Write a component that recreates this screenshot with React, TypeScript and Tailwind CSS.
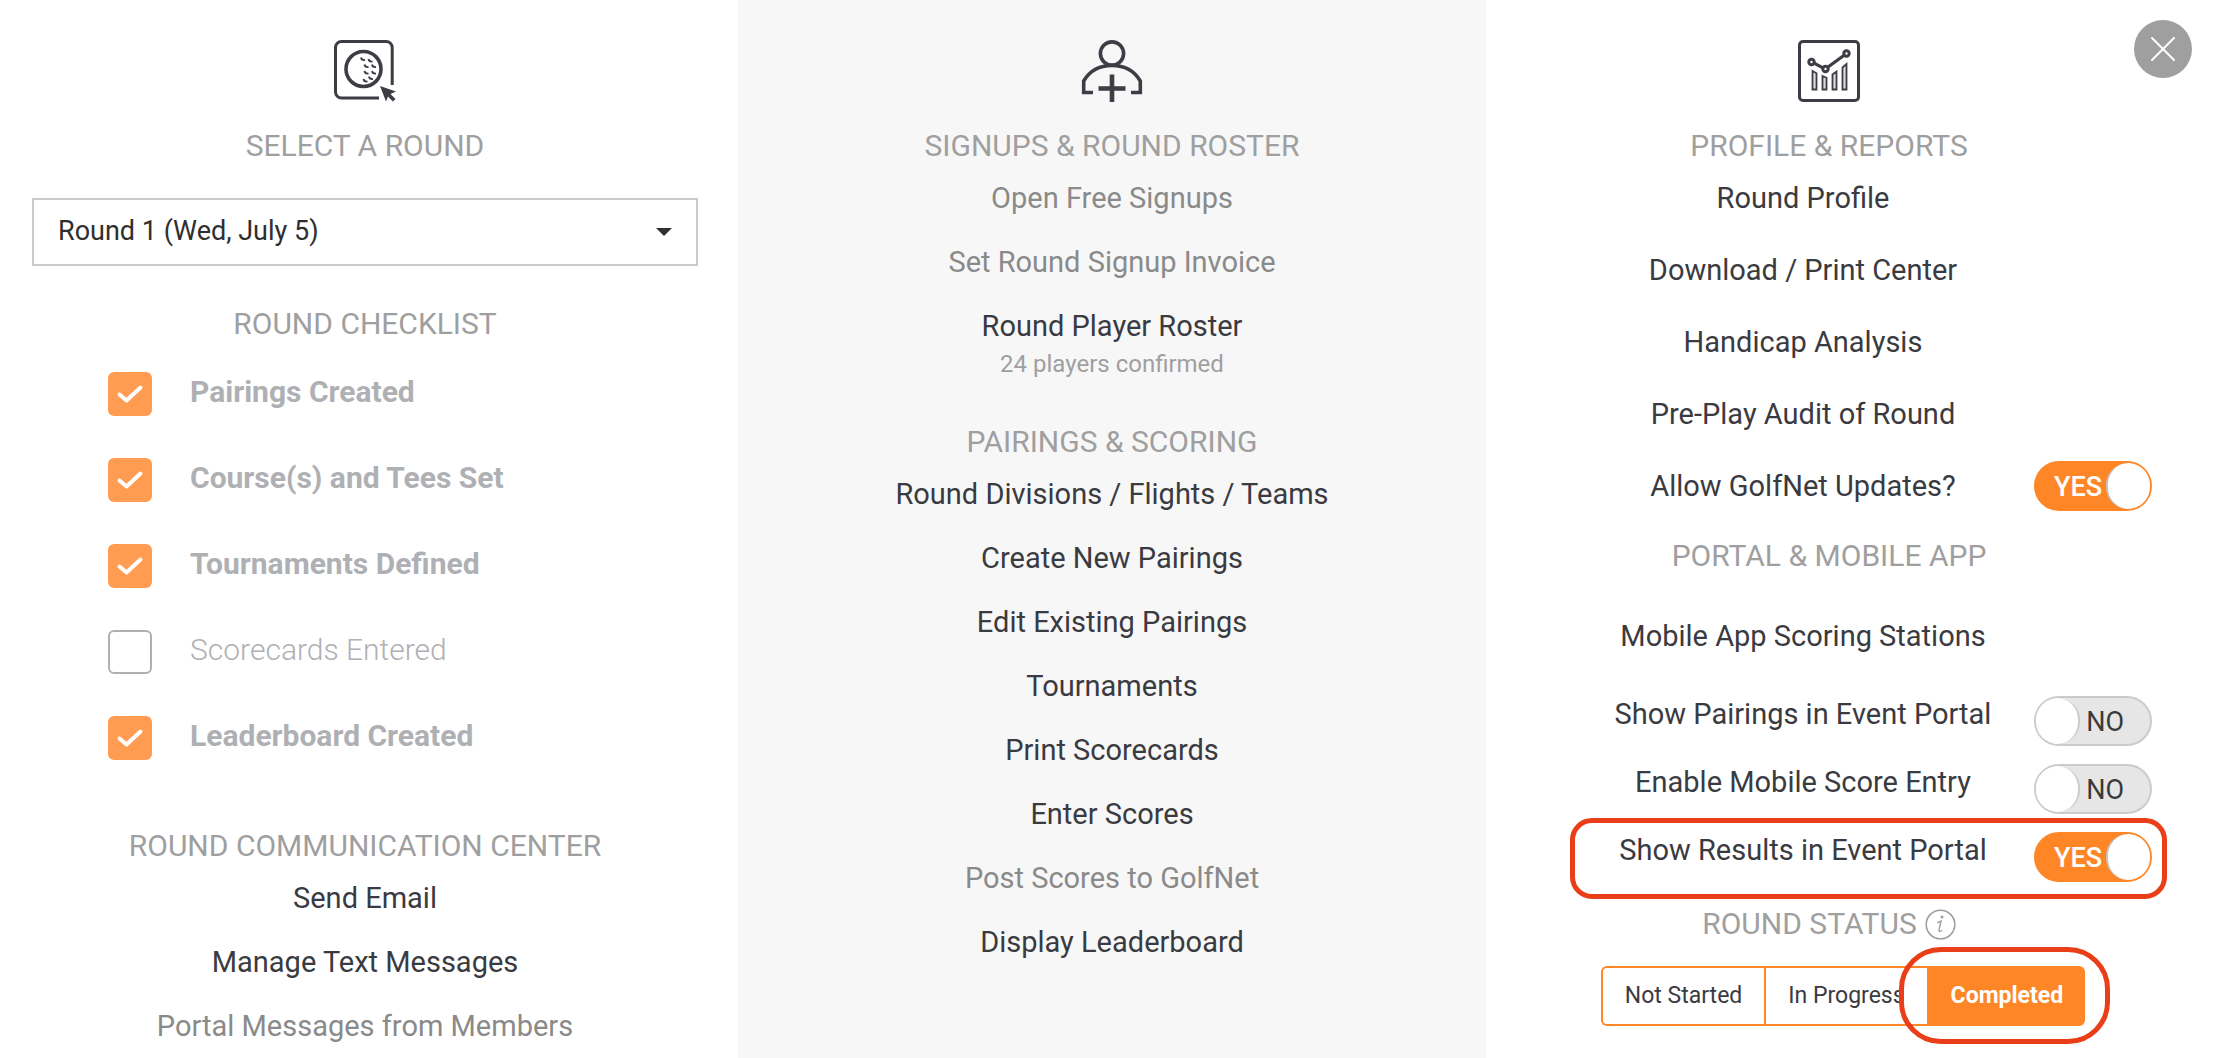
import { useState } from "react";
import type { ReactNode } from "react";

const checklist = [
  { id: "pairings", label: "Pairings Created", done: true },
  { id: "tees", label: "Course(s) and Tees Set", done: true },
  { id: "tournaments", label: "Tournaments Defined", done: true },
  { id: "scorecards", label: "Scorecards Entered", done: false },
  { id: "leaderboard", label: "Leaderboard Created", done: true },
];

const scoringLinks = [
  { label: "Round Divisions / Flights / Teams" },
  { label: "Create New Pairings" },
  { label: "Edit Existing Pairings" },
  { label: "Tournaments" },
  { label: "Print Scorecards" },
  { label: "Enter Scores" },
  { label: "Post Scores to GolfNet", muted: true },
  { label: "Display Leaderboard" },
];

const reportLinks = ["Round Profile", "Download / Print Center", "Handicap Analysis", "Pre-Play Audit of Round"];

const statuses = ["Not Started", "In Progress", "Completed"];

function Heading({ children }: { children: ReactNode }) {
  return (
    <h2 className="flex items-center justify-center gap-2 text-center text-[30px] leading-10 text-[#9f9f9f]">
      {children}
    </h2>
  );
}

function MenuLink({ label, muted = false }: { label: string; muted?: boolean }) {
  return (
    <a
      href="#"
      className={`block py-3 text-center text-[29px] leading-10 ${muted ? "text-[#8a8a8a]" : "text-[#3a3a41]"}`}
    >
      {label}
    </a>
  );
}

function ChecklistItem({ id, label, done }: { id: string; label: string; done: boolean }) {
  const [checked, setChecked] = useState(done);
  return (
    <li className="flex h-11 items-center">
      <span className="relative size-11">
        <input
          id={id}
          type="checkbox"
          checked={checked}
          onChange={(e) => setChecked(e.target.checked)}
          className="block size-11 appearance-none rounded-md border-2 border-[#b0b0b3] checked:border-[#ff9c52] checked:bg-[#ff9c52]"
        />
        {checked && (
          <svg className="pointer-events-none absolute inset-0 size-11" viewBox="0 0 44 44" fill="none">
            <path d="M11.5 22.5L18.5 28.5L32.5 15.5" stroke="#fff" strokeWidth="4" strokeLinecap="round" strokeLinejoin="round" />
          </svg>
        )}
      </span>
      <label
        htmlFor={id}
        className={`pb-1 pl-[38px] text-[30px] leading-10 text-[#afb0b4] ${checked ? "font-bold" : "font-light"}`}
      >
        {label}
      </label>
    </li>
  );
}

function Toggle({ id, initial }: { id: string; initial: boolean }) {
  const [on, setOn] = useState(initial);
  return (
    <span
      className={`relative flex h-[50px] w-[118px] shrink-0 items-center rounded-full border-2 pt-0.5 text-[27px] ${
        on ? "border-[#ff8626] bg-[#ff8626] pl-[18px] font-medium text-white" : "justify-end border-[#cbcbcb] bg-[#e6e6e6] pr-[26px] text-[#3a3a3a]"
      }`}
    >
      {on ? "YES" : "NO"}
      <span
        className={`absolute top-0 h-[46px] w-[44px] rounded-full bg-white ${
          on ? "right-0 border-l-2 border-[#c4c4c4]" : "left-0 border-r-2 border-[#cbcbcb]"
        }`}
      />
      <input
        id={id}
        type="checkbox"
        role="switch"
        checked={on}
        onChange={(e) => setOn(e.target.checked)}
        className="absolute inset-0 cursor-pointer appearance-none"
      />
    </span>
  );
}

function SwitchRow({ id, label, initial, highlight = false }: { id: string; label: string; initial: boolean; highlight?: boolean }) {
  return (
    <div className="relative flex h-[50px] items-start">
      <label htmlFor={id} className="flex-1 text-center text-[29px] leading-9 text-[#3a3a41]">
        {label}
      </label>
      <Toggle id={id} initial={initial} />
      {highlight && (
        <span className="pointer-events-none absolute -top-[14px] -right-[15px] -bottom-[17px] -left-[2px] rounded-[22px] border-5 border-[#e93e17]" />
      )}
    </div>
  );
}

function BallIcon() {
  return (
    <svg className="mx-auto size-[62px]" viewBox="0 0 62 62" fill="none" stroke="#3e3d45">
      <path d="M58.2 45V7.5a6 6 0 0 0-6-6H7.5a6 6 0 0 0-6 6v44.5a6 6 0 0 0 6 6H45" strokeWidth="3" />
      <circle cx="29.5" cy="29" r="17.5" strokeWidth="3.6" />
      <path
        d="M27 17.5q.5 3 4 2.500M34.500 19q.5 3 4 2.500M30.500 24.500q.5 3 4 2.500M38 24.500q.5 3 4 2.500M30.500 31q.5 3 4 2.500M38 31q.5 3 4 2.500M35 36.500q.5 3 4 2.500M29.500 39q.5 3 4 2.500"
        strokeWidth="1.8"
      />
      <path d="M46 46L62 51.5L56.5 54L61.5 59L58.8 61.5L54 56.5L52 61.5Z" fill="#3e3d45" stroke="none" />
    </svg>
  );
}

function PlayerIcon() {
  return (
    <svg className="mx-auto size-[62px]" viewBox="0 0 62 62" fill="none" stroke="#3e3d45" strokeWidth="3.6">
      <circle cx="31" cy="13.5" r="11.6" />
      <path d="M12 52.5H2.700V41C8.500 31 18.500 25.500 31 25.500S53.500 31 59.300 41v11.500H50" />
      <path d="M31 34.5V62M17.500 48.500h27" strokeWidth="4.6" />
    </svg>
  );
}

function ReportIcon() {
  return (
    <svg className="mx-auto size-[62px]" viewBox="0 0 62 62" fill="none" stroke="#3e3d45">
      <rect x="1.5" y="1.5" width="59" height="59" rx="3.5" strokeWidth="3" />
      <path d="M16 23.2L25 27.8M30 27L46.500 15" strokeWidth="3.2" />
      <circle cx="13.5" cy="22" r="2.7" strokeWidth="3" />
      <circle cx="27.5" cy="29" r="2.7" strokeWidth="3" />
      <circle cx="48.5" cy="13.5" r="2.7" strokeWidth="3" />
      <path
        d="M14.500 31l4 2.200V49.500h-4zM24.500 36l4 1.800V49.500h-4zM34.500 34.500l4-3V49.500h-4zM44.500 27.500l4-3.500V49.500h-4z"
        fill="#dcdcde"
        strokeWidth="1.8"
      />
    </svg>
  );
}

function InfoIcon() {
  return (
    <svg className="size-[31px]" viewBox="0 0 31 31" fill="none" stroke="#9f9f9f" strokeWidth="1.6" strokeLinecap="round">
      <circle cx="15.5" cy="15.5" r="14.3" />
      <path d="M12.8 13.5c1.500-.3 2.400-1.200 3.200-1.500l-2 9.200c-.2 1.500.7 1.800 2.800.3" strokeWidth="1.4" />
      <circle cx="17" cy="8" r=".7" fill="#9f9f9f" />
    </svg>
  );
}

export default function App() {
  const [status, setStatus] = useState("Completed");

  return (
    <main className="relative grid min-h-screen grid-cols-[738fr_748fr_738fr] bg-white font-['Roboto',sans-serif]">
      <section className="pt-10 pr-10 pl-8">
        <BallIcon />
        <div className="mt-6">
          <Heading>
            <label htmlFor="round">SELECT A ROUND</label>
          </Heading>
        </div>
        <div className="relative mt-8">
          <select
            id="round"
            className="h-17 w-full appearance-none border-2 border-[#cbcbcb] bg-white pb-0.5 pl-6 text-[27px] text-[#2f2f2f]"
          >
            <option>Round 1 (Wed, July 5)</option>
          </select>
          <svg className="pointer-events-none absolute top-[30px] right-[26px] h-2 w-4" viewBox="0 0 16 8">
            <path d="M0 0h16L8 8z" fill="#2f2f2f" />
          </svg>
        </div>

        <div className="mt-[38px]">
          <Heading>ROUND CHECKLIST</Heading>
        </div>
        <ul className="mt-7 flex flex-col gap-[42px] pl-[76px]">
          {checklist.map((item) => (
            <ChecklistItem key={item.id} {...item} />
          ))}
        </ul>

        <div className="mt-[66px]">
          <Heading>ROUND COMMUNICATION CENTER</Heading>
        </div>
        <nav>
          <MenuLink label="Send Email" />
          <MenuLink label="Manage Text Messages" />
          <MenuLink label="Portal Messages from Members" muted />
        </nav>
      </section>

      <section className="bg-[#f7f7f7] pt-10">
        <PlayerIcon />
        <div className="mt-6">
          <Heading>SIGNUPS &amp; ROUND ROSTER</Heading>
        </div>
        <nav>
          <MenuLink label="Open Free Signups" muted />
          <MenuLink label="Set Round Signup Invoice" muted />
          <a href="#" className="block pt-3 text-center text-[29px] leading-10 text-[#3a3a41]">
            Round Player Roster
            <span className="block text-2xl leading-9 text-[#9f9f9f]">24 players confirmed</span>
          </a>
        </nav>

        <div className="mt-10">
          <Heading>PAIRINGS &amp; SCORING</Heading>
        </div>
        <nav>
          {scoringLinks.map((link) => (
            <MenuLink key={link.label} {...link} />
          ))}
        </nav>
      </section>

      <section className="pt-10 pr-[52px] pb-8">
        <ReportIcon />
        <div className="mt-6">
          <Heading>PROFILE &amp; REPORTS</Heading>
        </div>
        <div className="mt-3 flex flex-col gap-8 pr-5 pl-[86px]">
          {reportLinks.map((label) => (
            <a key={label} href="#" className="mr-[118px] text-center text-[29px] leading-10 text-[#3a3a41]">
              {label}
            </a>
          ))}
          <div className="flex h-10 items-center">
            <label htmlFor="golfnet" className="flex-1 text-center text-[29px] leading-10 text-[#3a3a41]">
              Allow GolfNet Updates?
            </label>
            <Toggle id="golfnet" initial />
          </div>
        </div>

        <div className="mt-[30px]">
          <Heading>PORTAL &amp; MOBILE APP</Heading>
        </div>
        <div className="mt-10 pr-5 pl-[86px]">
          <a href="#" className="mr-[118px] block text-center text-[29px] leading-10 text-[#3a3a41]">
            Mobile App Scoring Stations
          </a>
          <div className="mt-10 flex flex-col gap-[18px]">
            <SwitchRow id="show-pairings" label="Show Pairings in Event Portal" initial={false} />
            <SwitchRow id="mobile-entry" label="Enable Mobile Score Entry" initial={false} />
            <SwitchRow id="show-results" label="Show Results in Event Portal" initial highlight />
          </div>
        </div>

        <div className="mt-[22px]">
          <Heading>
            ROUND STATUS
            <InfoIcon />
          </Heading>
        </div>
        <div className="mt-[22px] flex justify-center pl-7">
          {statuses.map((name) => (
            <button
              key={name}
              type="button"
              aria-pressed={status === name}
              onClick={() => setStatus(name)}
              className={`relative h-[60px] border-y-2 border-l-2 border-[#ff8626] px-[22px] text-[23px] whitespace-nowrap first:rounded-l-md last:rounded-r-md ${
                status === name ? "bg-[#ff8626] font-bold text-white" : "text-[#3a3a41]"
              }`}
            >
              {name}
              {name === "Completed" && (
                <span className="pointer-events-none absolute -top-[21px] -right-[25px] -bottom-[20px] -left-[30px] rounded-[42px] border-5 border-[#e93e17]" />
              )}
            </button>
          ))}
        </div>
      </section>

      <button
        type="button"
        aria-label="Close"
        className="absolute top-5 right-8 flex size-[58px] items-center justify-center rounded-full bg-[#9f9f9f]"
      >
        <svg className="size-6" viewBox="0 0 24 24" stroke="#fff" strokeWidth="2" strokeLinecap="round">
          <path d="M1 1L23 23M23 1L1 23" />
        </svg>
      </button>
    </main>
  );
}
